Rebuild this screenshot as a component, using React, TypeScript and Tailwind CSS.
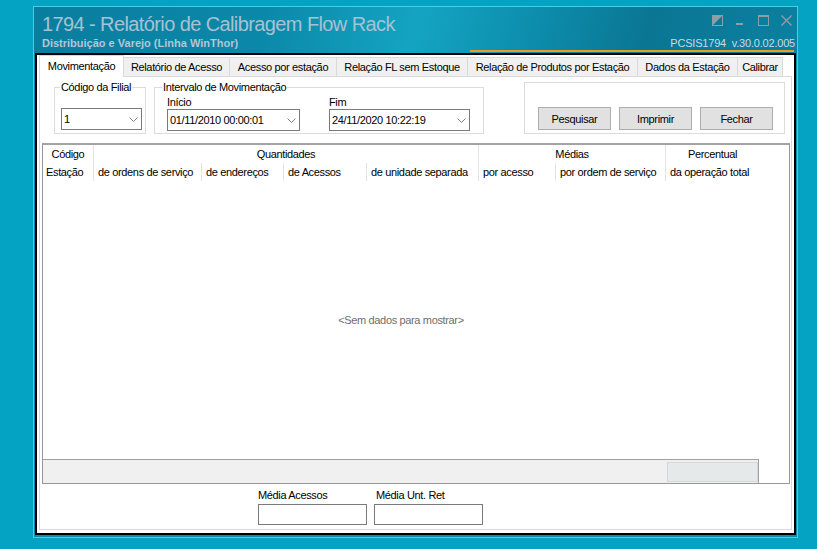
import React from "react";

const UI = "font-['Liberation_Sans',Arial,sans-serif] text-[11px] tracking-[-0.35px] text-black";

function Chevron() {
  return (
    <svg width="9" height="5" viewBox="0 0 9 5" className="shrink-0">
      <path d="M0.5 0.5 L4.5 4.5 L8.5 0.5" fill="none" stroke="#808080" strokeWidth="1" />
    </svg>
  );
}

function Combo({ value, w }: { value: string; w: string }) {
  return (
    <div className={`${w} h-[22px] border border-[#7a7a7a] bg-white flex items-center justify-between pl-[2px] pr-[3px]`}>
      <span className="leading-[14px] whitespace-nowrap">{value}</span>
      <Chevron />
    </div>
  );
}

function Btn({ label }: { label: string }) {
  return (
    <div className="w-[73px] h-[23px] bg-[#e1e1e1] border border-[#adadad] flex items-center justify-center leading-[14px]">
      {label}
    </div>
  );
}

const tabs: { label: string; w: string }[] = [
  { label: "Relatório de Acesso", w: "w-[106px]" },
  { label: "Acesso por estação", w: "w-[107px]" },
  { label: "Relação FL sem Estoque", w: "w-[131px]" },
  { label: "Relação de Produtos por Estação", w: "w-[170px]" },
  { label: "Dados da Estação", w: "w-[100px]" },
  { label: "Calibrar", w: "w-[45px]" },
];

export default function App() {
  return (
    <div className="w-[817px] h-[549px] bg-[#05a3c3] pt-[6px] pl-[33px] overflow-hidden">
      <div className="w-[765px] h-[532px] border border-[#45cfe2] bg-[#0a8cac] flex flex-col">
        {/* Title bar */}
        <div className="h-[46px] flex flex-col bg-[linear-gradient(105deg,#0a7d9e_0%,#0b88a9_30%,#14a4c2_50%,#0e92b1_62%,#0a7694_80%,#0b80a0_100%)]">
          <div className="h-[30px] flex justify-between">
            <div className="pl-[8px] pt-[5px] font-['Liberation_Sans',sans-serif] text-[20px] leading-[24px] tracking-[-0.6px] text-[#a6c2d3] whitespace-nowrap">
              1794 - Relatório de Calibragem Flow Rack
            </div>
            <div className="pt-[8px] pr-[5px] flex gap-[12px]">
              <svg width="11" height="11" viewBox="0 0 11 11">
                <rect x="0.5" y="0.5" width="10" height="10" fill="none" stroke="#8f9ea6" />
                <path d="M0 0 H11 L0 11 Z" fill="#8f9ea6" />
              </svg>
              <svg width="11" height="11" viewBox="0 0 11 11">
                <rect x="1" y="8" width="7" height="2" fill="#8f9ea6" />
              </svg>
              <svg width="11" height="11" viewBox="0 0 11 11">
                <rect x="0.5" y="1" width="10" height="9.5" fill="none" stroke="#8f9ea6" />
                <rect x="0" y="0" width="11" height="2" fill="#8f9ea6" />
              </svg>
              <svg width="11" height="11" viewBox="0 0 11 11">
                <path d="M0.5 0.5 L10.5 10.5 M10.5 0.5 L0.5 10.5" stroke="#8f9ea6" strokeWidth="1.4" />
              </svg>
            </div>
          </div>
          <div className="h-[13px] flex justify-between items-start">
            <div className="pl-[8px] font-['Liberation_Sans',sans-serif] font-bold text-[11px] leading-[13px] text-[#b3c5d8] whitespace-nowrap">
              Distribuição e Varejo (Linha WinThor)
            </div>
            <div className="pr-[2px] font-['Liberation_Sans',sans-serif] text-[11px] leading-[13px] tracking-[-0.2px] text-[#c6dae6] whitespace-pre">
              {"PCSIS1794  v.30.0.02.005"}
            </div>
          </div>
          <div className="h-[2px] w-[324px] ml-auto mr-[3px] bg-[#e8a021]" />
        </div>

        {/* Content */}
        <div className={`mx-[1px] h-[482px] border-2 border-black bg-white px-[2px] pb-[3px] flex flex-col ${UI}`}>
          {/* Tab strip */}
          <div className="h-[22px] flex items-end relative z-10">
            <div className="w-[85px] h-[22px] bg-white border-l border-t border-r border-[#d9d9d9] flex justify-center pt-[3px] leading-[14px] whitespace-nowrap">
              Movimentação
            </div>
            {tabs.map((t) => (
              <div
                key={t.label}
                className={`${t.w} h-[20px] bg-[#f0f0f0] border-t border-r border-b border-[#d9d9d9] flex justify-center pt-[2px] leading-[14px] whitespace-nowrap`}
              >
                {t.label}
              </div>
            ))}
          </div>

          {/* Tab page */}
          <div className="-mt-px h-[454px] border border-[#d9d9d9] flex flex-col">
            {/* Filters row */}
            <div className="h-[66px] flex items-start pl-[14px]">
              <div className="relative mt-[10px] w-[92px] h-[47px] border border-[#dcdcdc] pl-[6px] pt-[20px]">
                <span className="absolute -top-[8px] left-[5px] px-[1px] bg-white leading-[14px] whitespace-nowrap">Código da Filial</span>
                <Combo value="1" w="w-[81px]" />
              </div>
              <div className="relative mt-[10px] ml-[8px] w-[330px] h-[47px] border border-[#dcdcdc] pl-[12px] pt-[7px] flex gap-[29px]">
                <span className="absolute -top-[8px] left-[7px] px-[1px] bg-white leading-[14px] whitespace-nowrap">Intervalo de Movimentação</span>
                <div className="flex flex-col">
                  <span className="leading-[14px] h-[14px]">Início</span>
                  <Combo value="01/11/2010 00:00:01" w="w-[133px]" />
                </div>
                <div className="flex flex-col">
                  <span className="leading-[14px] h-[14px]">Fim</span>
                  <Combo value="24/11/2020 10:22:19" w="w-[141px]" />
                </div>
              </div>
              <div className="mt-[5px] ml-[40px] w-[261px] h-[52px] border border-[#dcdcdc] pl-[13px] pt-[24px] flex gap-[8px]">
                <Btn label="Pesquisar" />
                <Btn label="Imprimir" />
                <Btn label="Fechar" />
              </div>
            </div>

            {/* Grid */}
            <div className="ml-[2px] mr-[1px] h-[341px] border-t-2 border-t-[#a3a3a3] border-l border-r border-b border-[#9696a2] flex flex-col">
              <div className="grid grid-cols-[50px_108px_82px_83px_112px_77px_110px_94px_1fr] grid-rows-[18px_18px] leading-[18px] whitespace-nowrap">
                <div className="text-center">Código</div>
                <div className="col-span-4 border-l border-[#e3e3e3] text-center">Quantidades</div>
                <div className="col-span-2 border-l border-[#e3e3e3] text-center">Médias</div>
                <div className="border-l border-[#e3e3e3] text-center">Percentual</div>
                <div />
                <div className="pl-[3px]">Estação</div>
                <div className="border-l border-[#e3e3e3] pl-[4px]">de ordens de serviço</div>
                <div className="border-l border-[#e3e3e3] pl-[4px]">de endereços</div>
                <div className="border-l border-[#e3e3e3] pl-[4px]">de Acessos</div>
                <div className="border-l border-[#e3e3e3] pl-[4px]">de unidade separada</div>
                <div className="border-l border-[#e3e3e3] pl-[4px]">por acesso</div>
                <div className="border-l border-[#e3e3e3] pl-[4px]">por ordem de serviço</div>
                <div className="border-l border-[#e3e3e3] pl-[4px]">da operação total</div>
                <div />
              </div>
              <div className="flex-1 flex">
                <div className="w-[716px] flex items-center justify-center text-[#6e6e6e]">
                  {"<Sem dados para mostrar>"}
                </div>
              </div>
              <div className="h-[24px] flex">
                <div className="w-[716px] h-[24px] bg-[#f0f0f0] border-t border-r border-[#a0a0a0] flex justify-end items-start pt-[2px]">
                  <div className="w-[91px] h-[20px] bg-[#e6e9e9] border border-[#d6d6d6]" />
                </div>
              </div>
            </div>

            {/* Bottom panel */}
            <div className="h-[45px] pl-[218px] pt-[4px] flex gap-[7px]">
              <div className="flex flex-col gap-[2px]">
                <span className="leading-[14px]">Média Acessos</span>
                <div className="w-[109px] h-[21px] border border-[#7a7a7a] bg-white" />
              </div>
              <div className="flex flex-col gap-[2px]">
                <span className="leading-[14px] pl-[2px]">Média Unt. Ret</span>
                <div className="w-[109px] h-[21px] border border-[#7a7a7a] bg-white" />
              </div>
            </div>
          </div>
        </div>
      </div>
    </div>
  );
}
